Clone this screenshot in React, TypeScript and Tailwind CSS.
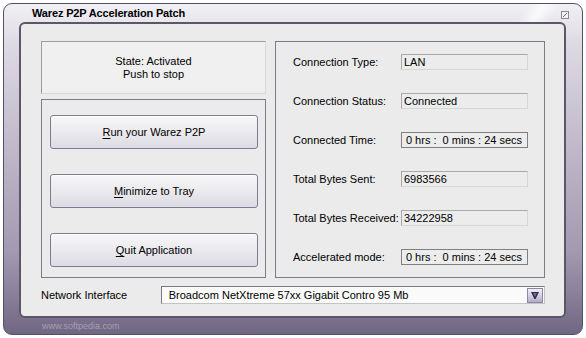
import React from "react";

const font = "font-['Liberation_Sans',Arial,sans-serif]";

function ValueBox({ value, time }: { value: string; time?: boolean }) {
  return (
    <div
      className={
        "h-[16px] w-[127px] flex items-center bg-[#ececec] leading-none " +
        (time
          ? "border border-[#808080] justify-center pr-[1px]"
          : "border border-t-[#a9a9a9] border-l-[#a9a9a9] border-r-[#d6d6d6] border-b-[#d6d6d6] pl-[2px]")
      }
    >
      <span className="whitespace-pre">{value}</span>
    </div>
  );
}

function Row({ label, value, time }: { label: string; value: string; time?: boolean }) {
  return (
    <div className="flex items-center h-[16px]">
      <div className="w-[108px] whitespace-nowrap">{label}</div>
      <ValueBox value={value} time={time} />
    </div>
  );
}

function Btn({ u, rest }: { u: string; rest: string }) {
  return (
    <div className="h-[34px] w-[208px] rounded-[3px] border border-[#7e7a92] bg-[linear-gradient(180deg,#f6f6f8_0%,#ebeaee_50%,#dddbe3_100%)] shadow-[inset_0_1px_0_#ffffff] flex items-center justify-center">
      <span>
        <span className="underline underline-offset-[2px]">{u}</span>
        {rest}
      </span>
    </div>
  );
}

export default function App() {
  return (
    <div className={"w-[586px] h-[338px] bg-white pt-[3px] pl-[3px] text-[11px] text-black " + font}>
      <div className="relative w-[580px] h-[332px] rounded-[9px] border border-[#55506a] bg-[linear-gradient(180deg,#f1f0f4_0%,#dedae3_12%,#c2bccc_40%,#a29ab0_75%,#716784_100%)] flex flex-col overflow-hidden">
        {/* gloss */}
        <div className="absolute right-[10px] top-0 w-[70px] h-[22px] bg-[linear-gradient(120deg,transparent_30%,rgba(255,255,255,0.7)_50%,transparent_70%)]" />
        {/* title */}
        <div className="relative h-[18px] flex items-center justify-between pl-[28px] pr-[13px]">
          <span className="font-bold text-[11px] tracking-[-0.15px] leading-none mt-[1px]">Warez P2P Acceleration Patch</span>
          <svg width="8" height="8" viewBox="0 0 8 8" className="mt-[4px]">
            <rect x="0.5" y="0.5" width="7" height="7" fill="#f4f4f6" stroke="#8a8898" />
            <line x1="2" y1="6" x2="6" y2="2" stroke="#6a6878" />
          </svg>
        </div>
        {/* inner panel */}
        <div className="relative ml-[15px] w-[547px] h-[296px] rounded-[6px] border-2 border-[#5b5768] bg-[#ebebeb] flex flex-col pt-[17px] pl-[20px] pr-[19px]">
          <div className="flex h-[237px] gap-[9px]">
            {/* left column */}
            <div className="w-[225px] flex flex-col gap-[5px]">
              <div className="h-[53px] border border-t-[#9c9c9c] border-l-[#9c9c9c] border-r-[#d8d8d8] border-b-[#d8d8d8] bg-[#f5f5f5] bg-[radial-gradient(#e8e8e8_0.6px,transparent_0.8px)] bg-[length:2px_2px] flex flex-col items-center justify-center leading-[13px]">
                <div>State: Activated</div>
                <div>Push to stop</div>
              </div>
              <div className="h-[179px] border border-[#7c7b88] flex flex-col pt-[15px] pl-[8px] gap-[25px]">
                <Btn u="R" rest="un your Warez P2P" />
                <Btn u="M" rest="inimize to Tray" />
                <Btn u="Q" rest="uit Application" />
              </div>
            </div>
            {/* right column */}
            <div className="w-[270px] border border-[#7c7b88] flex flex-col pt-[12px] pl-[17px] gap-[23px]">
              <Row label="Connection Type:" value="LAN" />
              <Row label="Connection Status:" value="Connected" />
              <Row label="Connected Time:" value="0 hrs :  0 mins : 24 secs" time />
              <Row label="Total Bytes Sent:" value="6983566" />
              <Row label="Total Bytes Received:" value="34222958" />
              <Row label="Accelerated mode:" value="0 hrs :  0 mins : 24 secs" time />
            </div>
          </div>
          <div className="mt-[8px] h-[18px] flex items-center">
            <div className="w-[120px] whitespace-nowrap">Network Interface</div>
            <div className="w-[385px] h-[18px] border border-t-[#7a7a7a] border-l-[#7a7a7a] border-r-[#c4c4c4] border-b-[#c4c4c4] bg-[#fafafa] flex items-center justify-between pl-[7px] pr-[1px]">
              <span className="whitespace-nowrap">Broadcom NetXtreme 57xx Gigabit Contro 95 Mb</span>
              <div className="w-[16px] h-[15px] border border-[#8e87a4] bg-[linear-gradient(180deg,#f0eef5_0%,#d2cde0_55%,#b3abc8_100%)] flex items-center justify-center">
                <svg width="10" height="10" viewBox="0 0 10 10">
                  <path d="M1 2 L9 2 L5.6 9 L4.4 9 Z" fill="#2d2b45" />
                  <path d="M3 3 L7 3 L5 7 Z" fill="#6d6a8c" />
                </svg>
              </div>
            </div>
          </div>
        </div>
        {/* watermark */}
        <div className="absolute left-[38px] top-[318px] text-[9px] text-white/35 pointer-events-none leading-none">
          www.softpedia.com
        </div>
      </div>
    </div>
  );
}
